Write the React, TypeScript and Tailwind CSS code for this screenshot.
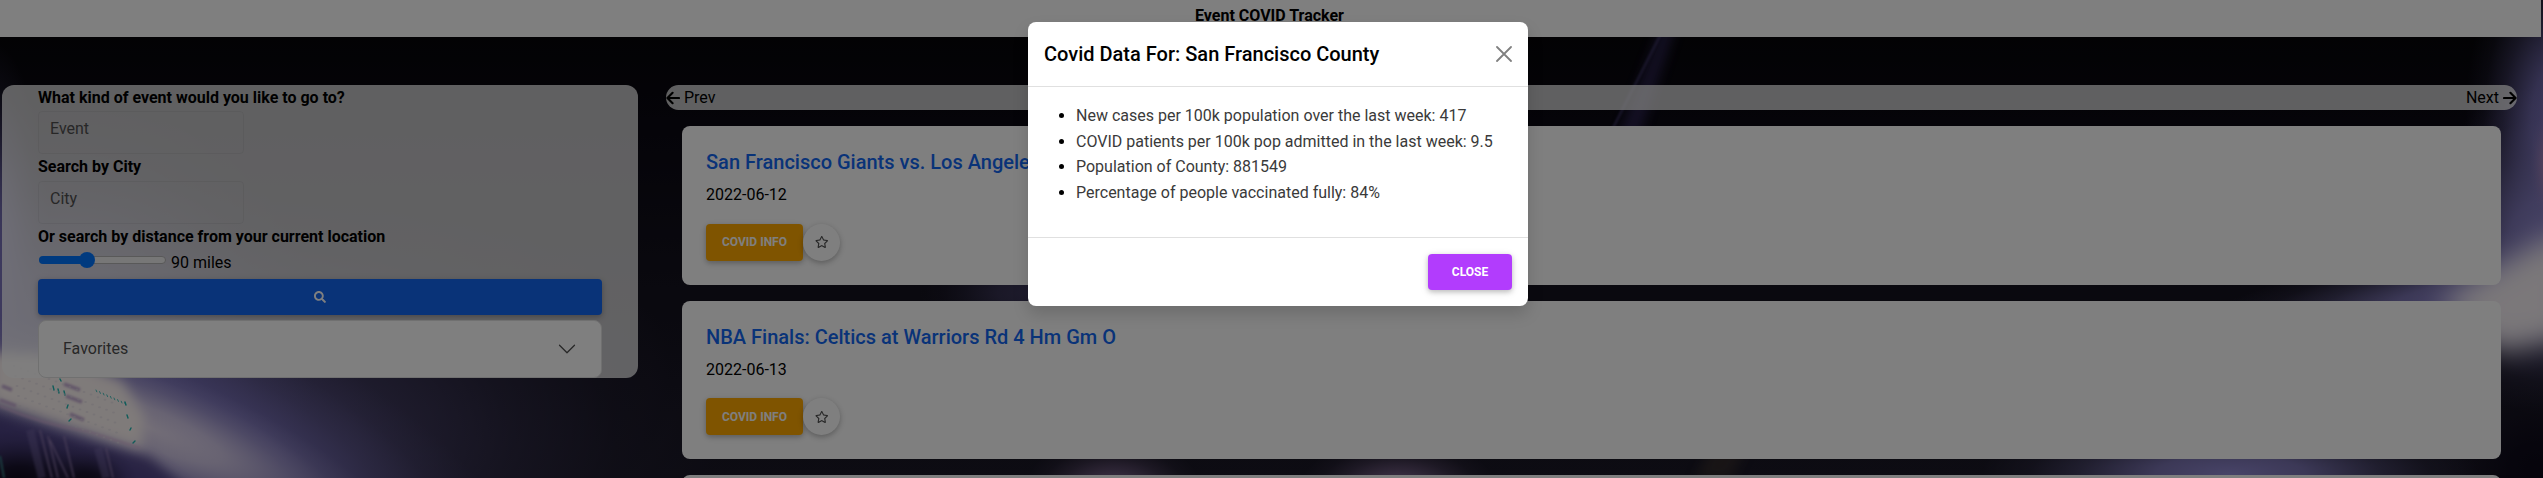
import React from "react";

const Star = () => (
  <svg viewBox="0 0 576 512" className="h-[12px] w-[13.5px]" fill="#4f4f4f">
    <path d="M528.1 171.5L382 150.2 316.7 17.8c-11.7-23.6-45.6-23.9-57.4 0L194 150.2 47.9 171.5c-26.2 3.8-36.7 36.1-17.7 54.6l105.7 103-25 145.5c-4.5 26.3 23.2 46 46.4 33.7L288 439.6l130.7 68.7c23.2 12.2 50.9-7.4 46.4-33.7l-25-145.5 105.7-103c19-18.5 8.5-50.8-17.7-54.6zM388.6 312.3l23.7 138.4L288 385.4l-124.3 65.3 23.7-138.4-100.6-98 139-20.2 62.2-126 62.2 126 139 20.2-100.6 98z" />
  </svg>
);

const Arrow = ({ flip }: { flip?: boolean }) => (
  <svg viewBox="0 0 14 16" className={flip ? "h-4 w-[14px] rotate-180" : "h-4 w-[14px]"} fill="none" stroke="#000" strokeWidth="2.100" strokeLinecap="round" strokeLinejoin="round">
    <path d="M13 8H1.800M6.600 2.800L1.400 8L6.600 13.200" />
  </svg>
);

function Glow({ id, color, strength = 1 }: { id: string; color: string; strength?: number }) {
  return (
    <radialGradient id={id}>
      <stop offset="0" stopColor={color} stopOpacity={strength} />
      <stop offset="0.3" stopColor={color} stopOpacity={strength * 0.8} />
      <stop offset="0.6" stopColor={color} stopOpacity={strength * 0.33} />
      <stop offset="0.8" stopColor={color} stopOpacity={strength * 0.1} />
      <stop offset="1" stopColor={color} stopOpacity={0} />
    </radialGradient>
  );
}

const lampRows = [0, 1, 2, 3, 4];
const lampCols = [0, 1, 2, 3, 4, 5, 6, 7, 8, 9, 10, 11, 12, 13, 14];

function Backdrop() {
  return (
    <svg className="absolute inset-0 h-full w-full" viewBox="0 0 2543 478" preserveAspectRatio="none">
      <defs>
        <filter id="b1" filterUnits="userSpaceOnUse" x="-100" y="-100" width="2743" height="678"><feGaussianBlur stdDeviation="1" /></filter>
        <filter id="b6" filterUnits="userSpaceOnUse" x="-100" y="-100" width="2743" height="678"><feGaussianBlur stdDeviation="6" /></filter>
        <filter id="b14" filterUnits="userSpaceOnUse" x="-100" y="-100" width="2743" height="678"><feGaussianBlur stdDeviation="14" /></filter>
        <linearGradient id="base" x1="0" y1="0" x2="0" y2="1">
          <stop offset="0" stopColor="#040404" />
          <stop offset="0.25" stopColor="#0a0812" />
          <stop offset="0.6" stopColor="#14121e" />
          <stop offset="1" stopColor="#1a1826" />
        </linearGradient>
        <Glow id="violet" color="#8078c4" />
        <Glow id="soft" color="#5c5488" strength={0.8} />
        <Glow id="mauve" color="#a080b4" />
        <Glow id="blue" color="#9088d0" />
        <Glow id="white" color="#fff4fa" />
        <Glow id="dark" color="#0c0818" />
      </defs>
      <rect width="2543" height="478" fill="url(#base)" />
      <ellipse cx="200" cy="440" rx="520" ry="260" fill="url(#soft)" />
      <ellipse cx="60" cy="340" rx="260" ry="240" fill="url(#violet)" opacity="0.7" />
      <ellipse cx="190" cy="435" rx="350" ry="130" transform="rotate(24 190 435)" fill="url(#violet)" />
      <ellipse cx="-10" cy="260" rx="60" ry="220" fill="url(#violet)" />
      <ellipse cx="150" cy="428" rx="260" ry="62" transform="rotate(23 150 428)" fill="url(#white)" opacity="0.8" />
      <ellipse cx="1030" cy="293" rx="110" ry="45" fill="url(#soft)" opacity="0.7" />
      <ellipse cx="1113" cy="490" rx="90" ry="52" fill="url(#mauve)" opacity="0.7" />
      <ellipse cx="1398" cy="490" rx="100" ry="52" fill="url(#mauve)" opacity="0.75" />
      <path d="M1664 20L1602 180L1624 180L1678 20Z" fill="#342c60" filter="url(#b6)" opacity="0.7" />
      <path d="M1668 20L1612 130" stroke="#484078" strokeWidth="2" filter="url(#b1)" opacity="0.7" />
      <path d="M1695 480L1715 440H1750L1730 480Z" fill="#3a302e" filter="url(#b6)" opacity="0.7" />
      <ellipse cx="2230" cy="474" rx="250" ry="62" fill="url(#blue)" />
      <ellipse cx="2560" cy="120" rx="95" ry="190" fill="url(#violet)" />
      <ellipse cx="2545" cy="250" rx="130" ry="165" fill="url(#blue)" />
      <ellipse cx="2480" cy="295" rx="300" ry="60" transform="rotate(-9 2480 295)" fill="url(#blue)" />
      <path d="M2440 302L2530 248L2570 230V336L2500 352Z" fill="#f6f0f4" filter="url(#b14)" />
      <ellipse cx="2548" cy="165" rx="18" ry="55" fill="url(#mauve)" />
      <ellipse cx="2535" cy="470" rx="90" ry="90" fill="url(#dark)" />
      <path d="M-20 412L60 434L150 458L200 500H-20Z" fill="#4a3e80" filter="url(#b6)" opacity="0.85" />
      <ellipse cx="20" cy="482" rx="90" ry="52" fill="url(#dark)" />
      <ellipse cx="88" cy="484" rx="50" ry="40" fill="url(#dark)" opacity="0.9" />
      <g filter="url(#b6)">
        <path d="M-10 352L60 356L122 382L144 416L142 448L60 424L-10 402Z" fill="#fff6f4" />
      </g>
      <g filter="url(#b1)" fill="none">
        <path d="M40 430L52 478M48 436L58 478M50 440L68 478M64 436L74 478M106 448L113 478" stroke="#9c84b8" strokeWidth="1.400" opacity="0.8" />
        <path d="M30 430L42 478M98 448L106 478" stroke="#8070b0" strokeWidth="8" opacity="0.4" />
        <path d="M0 456L4 478" stroke="#3c9090" strokeWidth="1.500" />
        <path d="M0 406Q40 424 90 432L140 448" stroke="#d8b0d8" strokeWidth="2" opacity="0.6" />
        <path d="M64 384L80 390M66 396L82 402M70 414L84 420M2 386L12 390M0 400L16 406" stroke="#c8b0d4" strokeWidth="4" />
      </g>
      <g stroke="#20b8b4" strokeWidth="1.400" strokeLinecap="round">
        <path d="M60 379l1 2M53 386l1 4M58 389l1 4M64 391l1 4M68 405l-1 3M71 419l-2 2M125 402l1 3M127 415l1 3M131 428l-1 2M135 441l-2 2" />
        {lampCols.slice(0, 9).map((c) => (
          <path key={c} d={`M${96 + c * 3.6} ${390 + c * 1.6}l.8 1.8`} strokeWidth="1" opacity="0.8" />
        ))}
      </g>
      <g fill="#e0dce4">
        {lampRows.map((r) => lampCols.map((c) => (
          <ellipse key={`${r}-${c}`} cx={14 + c * 7 + r * 1.5} cy={366 + r * 10 + c * 2.6} rx="1.4" ry="1" opacity="0.5" />
        )))}
      </g>
    </svg>
  );
}

function EventCard({ title, date }: { title: string; date: string }) {
  return (
    <div className="h-[158.6px] shrink-0 rounded-lg bg-white p-6">
      <h5 className="mb-2 text-[20px] leading-6 font-medium text-[#1266f1]">{title}</h5>
      <p className="mb-4 text-[16px] leading-[25.6px]">{date}</p>
      <div className="flex">
        <button className="h-[37px] w-[97px] rounded bg-[#ffa900] pt-[2px] text-[12px] font-bold text-white shadow-[0_2px_5px_rgba(0,0,0,0.2),0_2px_10px_rgba(0,0,0,0.1)]">COVID INFO</button>
        <button className="flex h-[37px] w-[37px] items-center justify-center rounded-full bg-white shadow-[0_2px_5px_rgba(0,0,0,0.2),0_2px_10px_rgba(0,0,0,0.1)]"><Star /></button>
      </div>
    </div>
  );
}

export default function App() {
  return (
    <div className="relative h-[478px] w-[2543px] overflow-hidden font-['Roboto',sans-serif] text-[16px] leading-[25.6px] text-black">
      <Backdrop />
      <div className="relative">
        <header className="h-[37px] w-[2541px] bg-white pt-[3px] pr-[2px] text-center font-bold">Event COVID Tracker</header>
        <div className="mt-12 flex items-start pl-[2px]">
          <aside className="h-[292.6px] w-[636px] rounded-xl bg-white/75 px-9 font-normal">
            <div className="h-[25.6px] font-bold">What kind of event would you like to go to?</div>
            <div className="h-[43.5px] w-[206px] rounded border border-black/5 px-[11px] pt-1 text-[#4f4f4f]">Event</div>
            <div className="h-[26.6px] font-bold">Search by City</div>
            <div className="h-[43.5px] w-[206px] rounded border border-black/5 px-[11px] pt-1 text-[#4f4f4f]">City</div>
            <div className="h-[25px] font-bold">Or search by distance from your current location</div>
            <div className="flex h-[30px] items-start">
              <div className="mt-[7px] ml-px flex h-2 w-[127px] items-center rounded-full border border-[#b2b2b2] bg-[#efefef]">
                <div className="-ml-px h-2 w-[41px] rounded-l-full bg-[#0075ff]" />
                <div className="-ml-px h-4 w-4 shrink-0 rounded-full bg-[#0075ff]" />
              </div>
              <span className="ml-[5px] pt-px">90 miles</span>
            </div>
            <button className="flex h-9 w-[564px] items-center justify-center rounded bg-[#1266f1] shadow-[0_2px_5px_rgba(0,0,0,0.2),0_2px_10px_rgba(0,0,0,0.1)]">
              <svg viewBox="0 0 512 512" className="h-3 w-3" fill="#fff"><path d="M505 442.7L405.3 343c-4.5-4.5-10.6-7-17-7H372c27.6-35.3 44-79.7 44-128C416 93.1 322.9 0 208 0S0 93.1 0 208s93.1 208 208 208c48.3 0 92.7-16.4 128-44v16.3c0 6.4 2.5 12.5 7 17l99.7 99.7c9.4 9.4 24.6 9.4 33.9 0l28.3-28.3c9.4-9.4 9.4-24.6.1-34zM208 336c-70.7 0-128-57.2-128-128 0-70.7 57.2-128 128-128 70.7 0 128 57.2 128 128 0 70.7-57.2 128-128 128z" /></svg>
            </button>
            <div className="mt-[5px] flex h-[58px] w-[564px] items-center justify-between rounded-lg border border-[#e0e0e0] bg-white px-6 text-[#4f4f4f]">
              <span>Favorites</span>
              <svg viewBox="0 0 16 16" className="h-5 w-5" fill="none" stroke="#4f4f4f" strokeWidth="1" strokeLinecap="round" strokeLinejoin="round"><path d="M2 5l6 6 6-6" /></svg>
            </div>
          </aside>
          <main className="ml-[28px] w-[1851px]">
            <nav className="flex h-[25px] items-center justify-between rounded-full bg-white/75">
              <span className="flex items-center gap-1"><Arrow />Prev</span>
              <span className="flex items-center gap-1">Next<Arrow flip /></span>
            </nav>
            <div className="mx-4 mt-4 flex flex-col gap-4">
              <EventCard title="San Francisco Giants vs. Los Angeles" date="2022-06-12" />
              <EventCard title="NBA Finals: Celtics at Warriors Rd 4 Hm Gm O" date="2022-06-13" />
              <div className="h-10 rounded-t-lg bg-white" />
            </div>
          </main>
        </div>
      </div>
      <div className="absolute inset-0 flex items-start justify-center bg-black/50 pt-[22px] pl-[13px]">
        <section className="h-[284px] w-[500px] rounded-lg bg-white shadow-[0_8px_16px_rgba(0,0,0,0.15)]">
          <div className="flex h-[65px] items-center justify-between border-b border-[#e0e0e0] px-4">
            <h5 className="text-[20px] leading-[30px] font-medium">Covid Data For: San Francisco County</h5>
            <svg viewBox="0 0 16 16" className="h-4 w-4" stroke="#808080" strokeWidth="1.8" strokeLinecap="round"><path d="M1 1L15 15M15 1L1 15" /></svg>
          </div>
          <ul className="h-[151px] list-disc border-b border-[#e0e0e0] pt-4 pl-12 text-[#3a3a3a] marker:text-black">
            <li>New cases per 100k population over the last week: 417</li>
            <li>COVID patients per 100k pop admitted in the last week: 9.5</li>
            <li>Population of County: 881549</li>
            <li>Percentage of people vaccinated fully: 84%</li>
          </ul>
          <div className="flex justify-end px-4 pt-4">
            <button className="h-9 w-[84px] rounded bg-[#b23cfd] pt-[2px] text-[12px] font-bold text-white shadow-[0_2px_5px_rgba(0,0,0,0.2),0_2px_10px_rgba(0,0,0,0.1)]">CLOSE</button>
          </div>
        </section>
      </div>
    </div>
  );
}
